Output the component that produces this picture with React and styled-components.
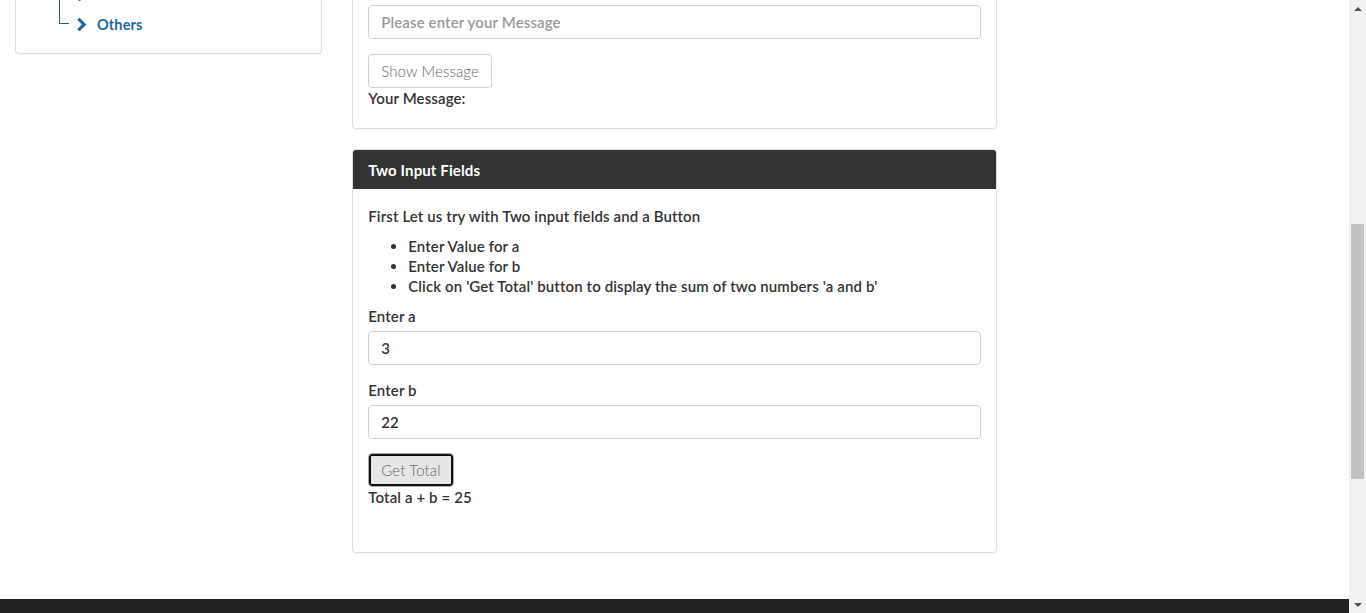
import React from "react";
import styled, { createGlobalStyle } from "styled-components";

const Global = createGlobalStyle`
  html, body {
    margin: 0;
    padding: 0;
    height: 613px;
    overflow: hidden;
    background: #fff;
  }
  body {
    font-family: Lato, "Open Sans", "Liberation Sans", sans-serif;
    font-size: 15px;
    letter-spacing: 0.12px;
    color: #333;
  }
  * { box-sizing: border-box; }
`;

const Page = styled.div`
  display: flex;
  width: 1366px;
  height: 613px;
`;

const Main = styled.div`
  flex: 1;
  display: flex;
  flex-direction: column;
  overflow: hidden;
`;

const Row = styled.div`
  display: grid;
  grid-template-columns: 3fr 6fr 3fr;
  margin-top: -40px;
`;

const Col = styled.div`
  padding: 0 15px;
  display: flex;
  flex-direction: column;
  align-items: stretch;
`;

const Card = styled.div`
  border: 1px solid #dcdcdc;
  border-radius: 4px;
  background: #fff;
  box-shadow: 0 1px 1px rgba(0, 0, 0, 0.04);
  margin-bottom: ${(p) => p.$mb || 0}px;
  overflow: hidden;
`;

const SideBody = styled.div`
  padding: 18px 15px 14px 43px;
`;

const Tree = styled.ul`
  list-style: none;
  margin: 0;
  padding: 0;
`;

const TreeItem = styled.li`
  position: relative;
  display: flex;
  align-items: center;
  gap: 10px;
  height: 30px;
  padding-left: 18px;
  color: #1c6aa3;
  font-weight: 700;
  font-size: 14.5px;
  &::before {
    content: "";
    position: absolute;
    left: 0;
    top: -60px;
    width: 9px;
    height: 74px;
    border-left: 1px solid #1f5d8c;
    border-bottom: 1px solid #1f5d8c;
  }
`;

const Chevron = () => (
  <svg width="10" height="13" viewBox="0 0 10 13" aria-hidden="true">
    <polyline
      points="2.5,1.8 7.2,6.5 2.5,11.2"
      fill="none"
      stroke="#1c6aa3"
      strokeWidth="3.2"
      strokeLinecap="square"
    />
  </svg>
);

const Body = styled.div`
  padding: ${(p) => p.$pt}px 15px ${(p) => p.$pb}px;
  display: flex;
  flex-direction: column;
  align-items: flex-start;
`;

const Header = styled.div`
  background: #333;
  color: #fff;
  height: 39px;
  display: flex;
  align-items: center;
  padding: 0 15px;
  font-weight: 700;
  font-size: 15px;
`;

const Input = styled.input`
  width: 100%;
  height: 34px;
  border: 1px solid #cfcfcf;
  border-radius: 4px;
  padding: 0 12px;
  font-family: inherit;
  font-size: 15px;
  letter-spacing: 0.12px;
  font-weight: 600;
  color: #333;
  margin-top: ${(p) => p.$mt || 0}px;
  outline: none;
  &::placeholder {
    color: #9a9a9a;
  }
`;

const Button = styled.button`
  height: 34px;
  padding: 0 12px;
  margin-top: ${(p) => p.$mt ?? 15}px;
  background: ${(p) => (p.$focused ? "#e6e6e6" : "#fff")};
  border: 1px solid ${(p) => (p.$focused ? "#a8a8a8" : "#cfcfcf")};
  border-radius: 4px;
  box-shadow: ${(p) => (p.$focused ? "inset 0 0 0 2px #111" : "none")};
  font-family: inherit;
  font-size: 15px;
  letter-spacing: 0.12px;
  font-weight: 300;
  color: #666;
  cursor: pointer;
`;

const Line = styled.div`
  line-height: 20px;
  font-weight: 600;
  color: #333;
  margin-top: ${(p) => p.$mt || 0}px;
`;

const Bullets = styled.ul`
  margin: 10px 0 0;
  padding-left: 40px;
  line-height: 20px;
  font-weight: 600;
  color: #333;
`;

const Label = styled.label`
  display: block;
  line-height: 20px;
  font-weight: 600;
  color: #333;
  margin-top: ${(p) => p.$mt || 0}px;
`;

const Field = styled.div`
  width: 100%;
  display: flex;
  flex-direction: column;
`;

const Footer = styled.footer`
  margin-top: 46px;
  height: 60px;
  background: #222;
  flex-shrink: 0;
`;

const Scrollbar = styled.div`
  width: 17px;
  height: 613px;
  background: #f1f1f1;
  display: flex;
  flex-direction: column;
`;

const Arrow = styled.div`
  height: 17px;
  display: flex;
  align-items: center;
  justify-content: center;
  &::after {
    content: "";
    border-left: 4px solid transparent;
    border-right: 4px solid transparent;
    ${(p) =>
      p.$down
        ? "border-top: 4px solid #505050;"
        : "border-bottom: 4px solid #505050;"}
  }
`;

const Track = styled.div`
  flex: 1;
  padding: 207px 2px 0;
`;

const Thumb = styled.div`
  height: 255px;
  background: #c1c1c1;
`;

export default function App() {
  return (
    <>
      <Global />
      <Page>
        <Main>
          <Row>
            <Col>
              <Card>
                <SideBody>
                  <Tree>
                    <TreeItem>
                      <Chevron />
                      <span>List Box</span>
                    </TreeItem>
                    <TreeItem>
                      <Chevron />
                      <span>Others</span>
                    </TreeItem>
                  </Tree>
                </SideBody>
              </Card>
            </Col>
            <Col>
              <Card $mb={20}>
                <Body $pt={44} $pb={20}>
                  <Input placeholder="Please enter your Message" readOnly />
                  <Button>Show Message</Button>
                  <Line>Your Message:</Line>
                </Body>
              </Card>
              <Card>
                <Header>Two Input Fields</Header>
                <Body $pt={17} $pb={45}>
                  <Line>First Let us try with Two input fields and a Button</Line>
                  <Bullets>
                    <li>Enter Value for a</li>
                    <li>Enter Value for b</li>
                    <li>
                      Click on 'Get Total' button to display the sum of two
                      numbers 'a and b'
                    </li>
                  </Bullets>
                  <Field>
                    <Label $mt={10}>Enter a</Label>
                    <Input $mt={5} defaultValue="3" />
                  </Field>
                  <Field>
                    <Label $mt={15}>Enter b</Label>
                    <Input $mt={5} defaultValue="22" />
                  </Field>
                  <Button $focused $mt={14}>Get Total</Button>
                  <Line>Total a + b = 25</Line>
                </Body>
              </Card>
            </Col>
            <Col />
          </Row>
          <Footer />
        </Main>
        <Scrollbar>
          <Arrow />
          <Track>
            <Thumb />
          </Track>
          <Arrow $down />
        </Scrollbar>
      </Page>
    </>
  );
}
